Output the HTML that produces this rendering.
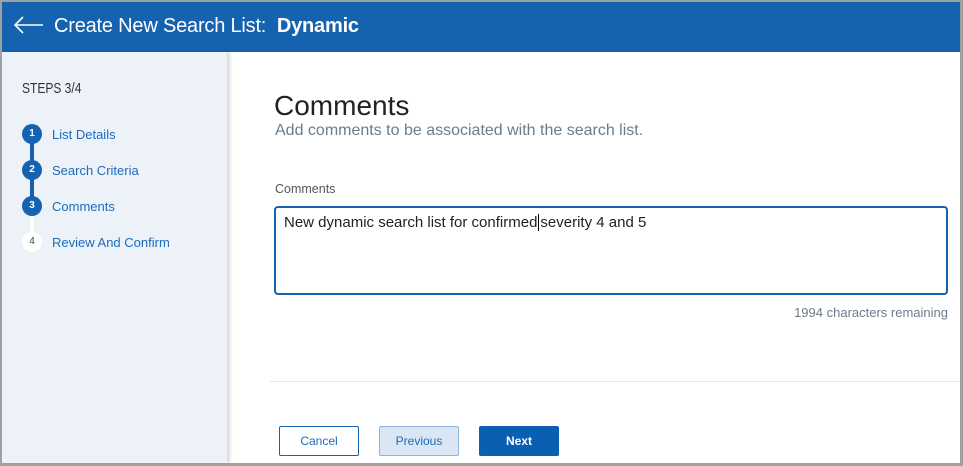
<!DOCTYPE html>
<html><head><style>
*{box-sizing:border-box;margin:0;padding:0}
body{width:963px;height:466px;overflow:hidden;background:#a0a0a0;font-family:"Liberation Sans",sans-serif;position:relative}
#frame{position:absolute;left:2px;top:2px;width:958px;height:461px;background:#fff;overflow:hidden}
#hdr{position:absolute;left:0;top:0;width:958px;height:50px;background:#1462b0;color:#fff}
#hdr .t{position:absolute;left:52px;top:13px;font-size:20px;letter-spacing:-0.2px}
#side{position:absolute;left:0;top:50px;width:226px;height:411px;background:#edf2f9;border-right:1px solid #d8dde5;box-shadow:2px 0 3px rgba(0,0,0,.15)}
.steps{position:absolute;left:20px;top:28px;font-size:15px;color:#333;transform:scaleX(.8);transform-origin:left}
.st{position:absolute;left:20px;font-size:13px;color:#1a6bbd}
.st i{position:absolute;left:0;top:0;width:20px;height:20px;border-radius:50%;background:#1462b0;color:#fff;font-style:normal;font-size:10px;font-weight:bold;text-align:center;line-height:20px}
.st span{position:absolute;left:30px;top:3px;white-space:nowrap}
.ln{position:absolute;left:28px;width:4px;background:#1462b0}
</style></head><body>
<div id="frame">
<div id="hdr">
<svg style="position:absolute;left:11px;top:13px" width="32" height="20" viewBox="0 0 32 20"><path d="M30 10H2M10 2L2 10l8 8" stroke="#fff" stroke-width="1.6" fill="none"/></svg>
<div class="t">Create New Search List:&nbsp; <b>Dynamic</b></div>
</div>
<div id="side">
<div class="steps">STEPS 3/4</div>
<div class="ln" style="top:80px;height:80px"></div>
<div class="ln" style="top:160px;height:30px;background:#fff"></div>
<div class="st" style="top:72px"><i>1</i><span>List Details</span></div>
<div class="st" style="top:108px"><i>2</i><span>Search Criteria</span></div>
<div class="st" style="top:144px"><i>3</i><span>Comments</span></div>
<div class="st" style="top:180px"><i style="background:#fff;color:#444;font-weight:normal">4</i><span>Review And Confirm</span></div>
</div>
<div style="position:absolute;left:272px;top:88px;font-size:28px;color:#222">Comments</div>
<div style="position:absolute;left:273px;top:120px;font-size:16px;color:#6b7c8c">Add comments to be associated with the search list.</div>
<div style="position:absolute;left:273px;top:180px;font-size:12.5px;color:#555">Comments</div>
<div style="position:absolute;left:272px;top:204px;width:674px;height:89px;border:2px solid #1462b0;border-radius:4px;padding:6px 8px;font-size:15px;color:#222">New dynamic search list for confirmed<span style="border-left:1.5px solid #000;margin:0 1px"></span>severity 4 and 5</div>
<div style="position:absolute;right:12px;top:303px;font-size:13px;color:#6b7c8c">1994 characters remaining</div>
<div style="position:absolute;left:268px;top:379px;width:690px;height:1px;background:#e6e6e6"></div>
<div style="position:absolute;left:277px;top:424px;width:80px;height:30px;border:1px solid #1462b0;border-radius:2px;color:#1a6bbd;font-size:12px;text-align:center;line-height:28px">Cancel</div>
<div style="position:absolute;left:377px;top:424px;width:80px;height:30px;border:1px solid #8fb3dc;background:#dae6f4;border-radius:2px;color:#1a6bbd;font-size:12px;text-align:center;line-height:28px">Previous</div>
<div style="position:absolute;left:477px;top:424px;width:80px;height:30px;background:#0b5fb3;border-radius:2px;color:#fff;font-size:12px;font-weight:bold;text-align:center;line-height:30px">Next</div>
</div>
</body></html>
